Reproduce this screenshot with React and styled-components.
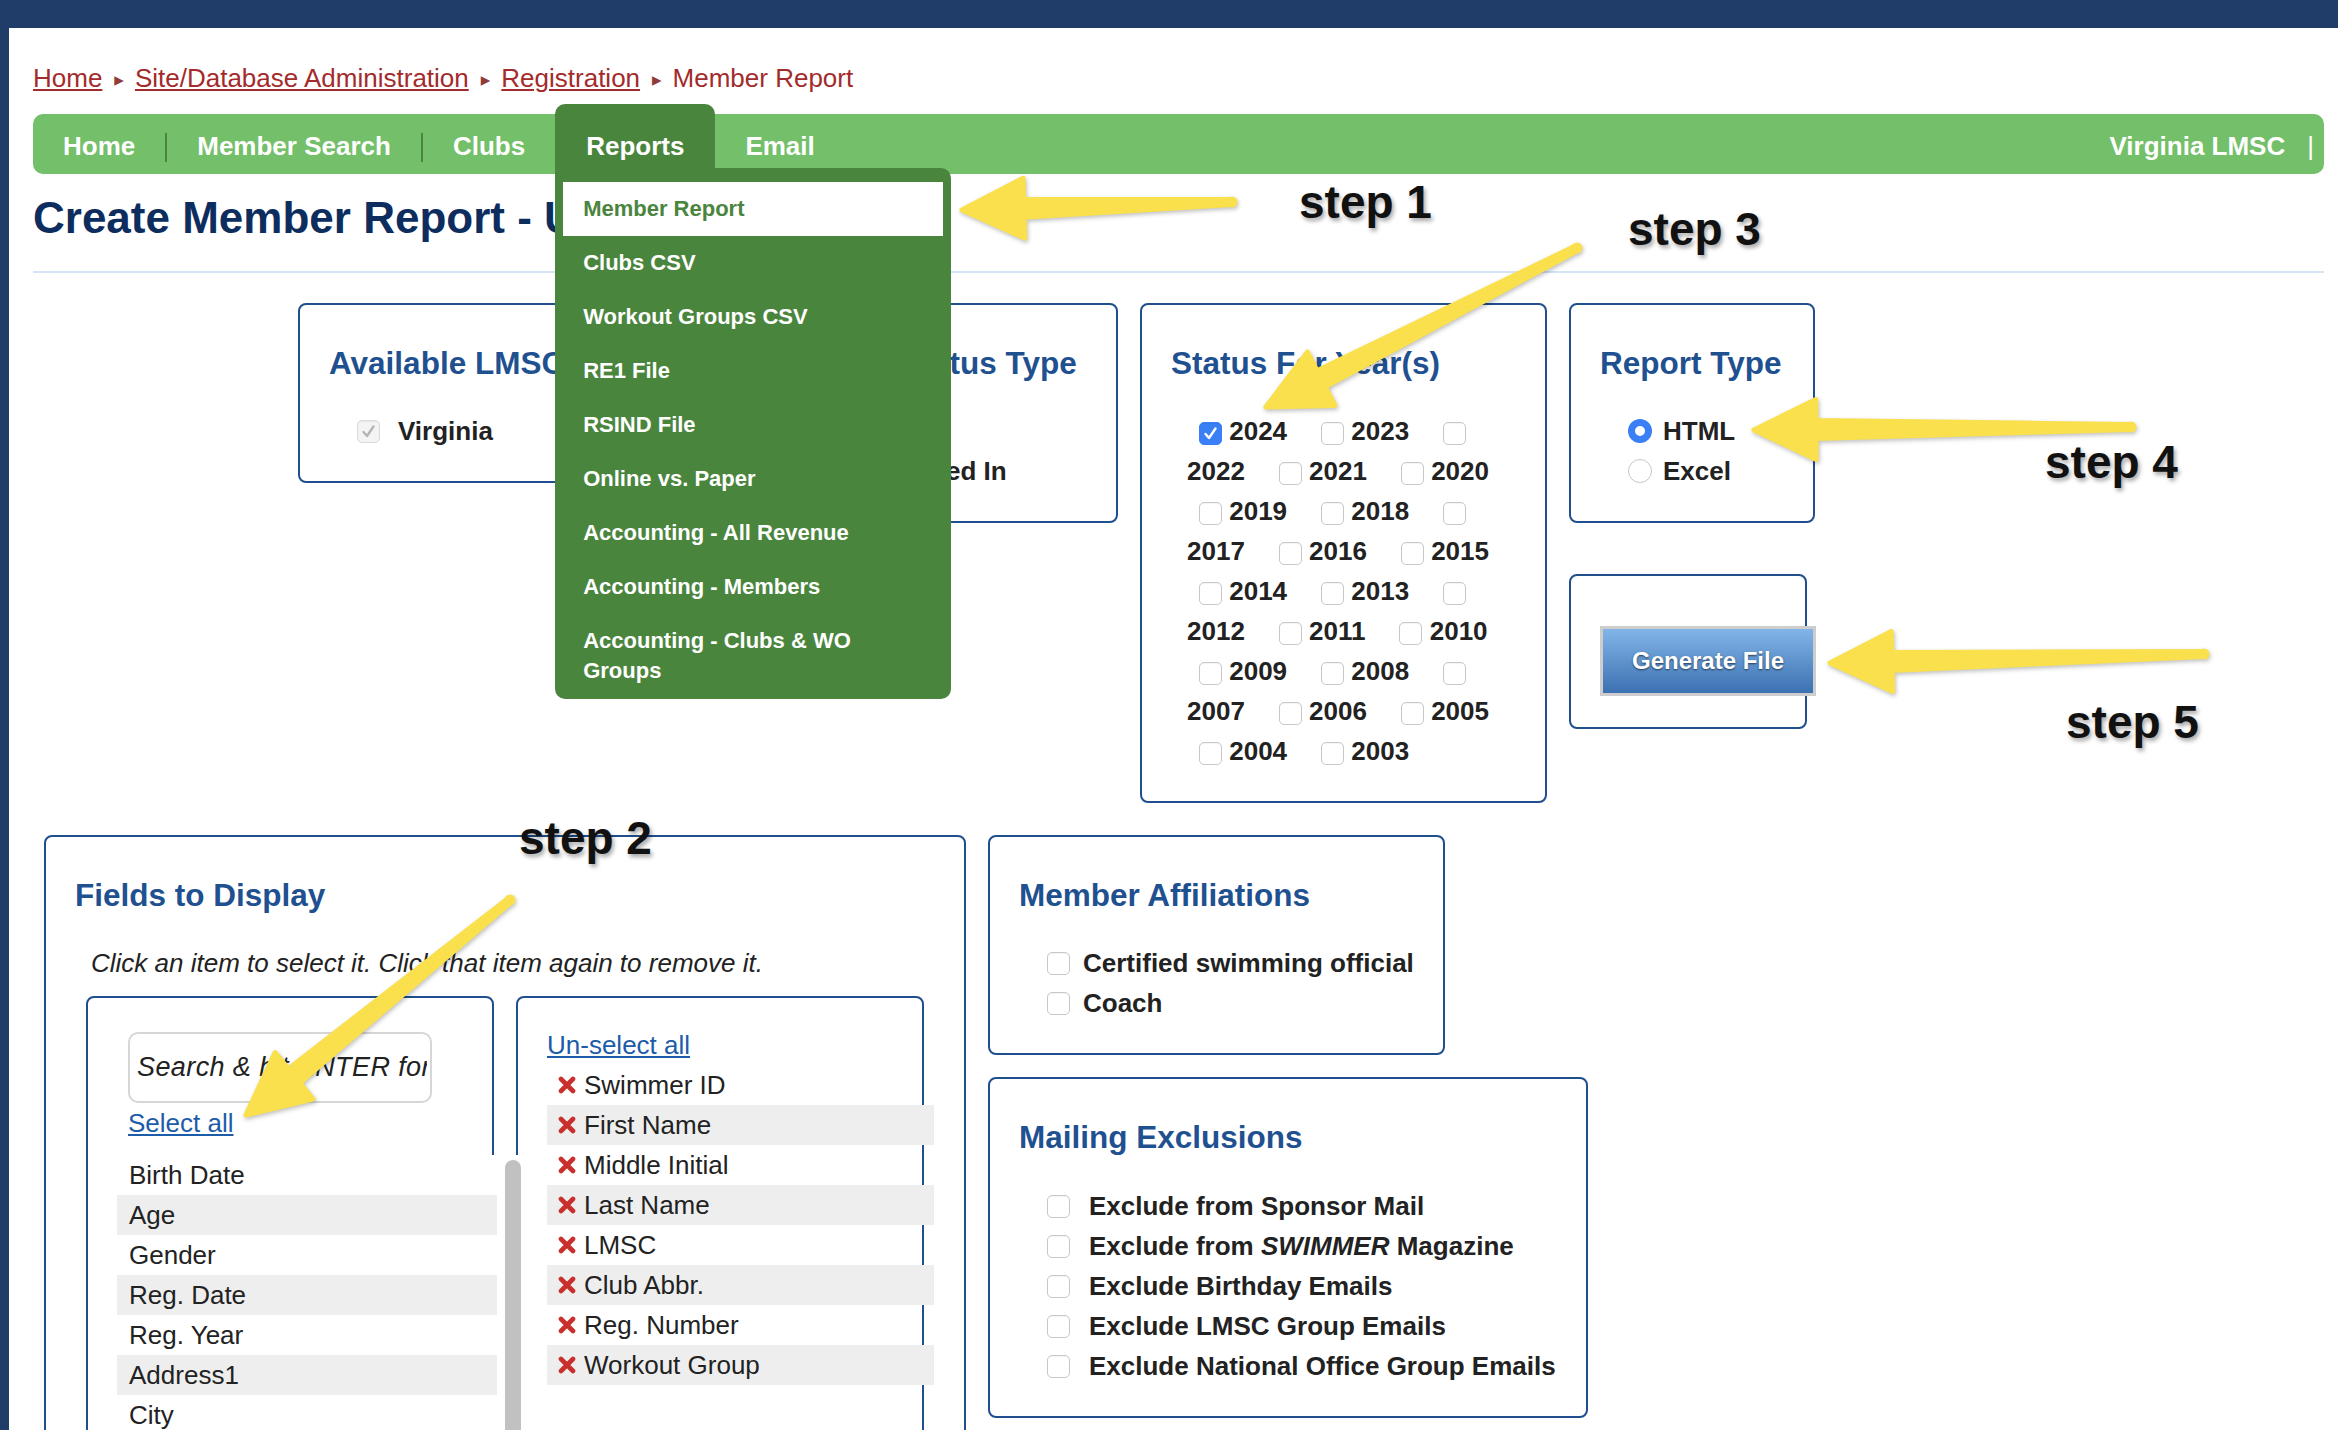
import React, { Fragment } from "react";
import styled, { createGlobalStyle } from "styled-components";

const GlobalStyle = createGlobalStyle`
  html, body {
    margin: 0;
    padding: 0;
    overflow: hidden;
    background: #fff;
  }
  body {
    font-family: "Liberation Sans", Arial, sans-serif;
    color: #222;
  }
`;

const navLinks = ["Home", "Member Search", "Clubs"];

const reportMenu = [
  "Member Report",
  "Clubs CSV",
  "Workout Groups CSV",
  "RE1 File",
  "RSIND File",
  "Online vs. Paper",
  "Accounting - All Revenue",
  "Accounting - Members",
  "Accounting - Clubs & WO Groups",
];

const years = Array.from({ length: 22 }, (v, i) => 2024 - i);

const availableFields = [
  "Birth Date",
  "Age",
  "Gender",
  "Reg. Date",
  "Reg. Year",
  "Address1",
  "City",
  "State",
  "Zip",
  "Country",
  "Email",
  "Phone",
];

const chosenFields = [
  "Swimmer ID",
  "First Name",
  "Middle Initial",
  "Last Name",
  "LMSC",
  "Club Abbr.",
  "Reg. Number",
  "Workout Group",
];

const exclusions = [
  "Exclude from Sponsor Mail",
  <Fragment>
    Exclude from <i>SWIMMER</i> Magazine
  </Fragment>,
  "Exclude Birthday Emails",
  "Exclude LMSC Group Emails",
  "Exclude National Office Group Emails",
];

// annotation arrows: tail -> tip
const arrows = [
  [[1232, 202], [962, 210]],
  [[510, 900], [246, 1115]],
  [[1577, 248], [1266, 407]],
  [[2131, 427], [1754, 430]],
  [[2204, 654], [1830, 663]],
];

const steps = [
  { label: "step 1", x: 1299, y: 180 },
  { label: "step 2", x: 519, y: 816 },
  { label: "step 3", x: 1628, y: 207 },
  { label: "step 4", x: 2045, y: 440 },
  { label: "step 5", x: 2066, y: 700 },
];

function arrowPoints([tx, ty], [px, py]) {
  const head = 62;
  const headW = 60;
  const tail = 5;
  const neck = 18;
  const dx = px - tx;
  const dy = py - ty;
  const len = Math.hypot(dx, dy);
  const ux = dx / len;
  const uy = dy / len;
  const nx = -uy;
  const ny = ux;
  const bx = px - ux * head;
  const by = py - uy * head;
  const pt = (x, y) => `${x.toFixed(1)},${y.toFixed(1)}`;
  return [
    pt(tx + (nx * tail) / 2, ty + (ny * tail) / 2),
    pt(bx + (nx * neck) / 2, by + (ny * neck) / 2),
    pt(bx + (nx * headW) / 2, by + (ny * headW) / 2),
    pt(px, py),
    pt(bx - (nx * headW) / 2, by - (ny * headW) / 2),
    pt(bx - (nx * neck) / 2, by - (ny * neck) / 2),
    pt(tx - (nx * tail) / 2, ty - (ny * tail) / 2),
  ].join(" ");
}

function CheckMark({ color }) {
  return (
    <svg width="17" height="17" viewBox="0 0 17 17">
      <path
        d="M3.5 9 L7 13 L13.5 3.5"
        fill="none"
        stroke={color}
        strokeWidth="2.4"
        strokeLinecap="round"
        strokeLinejoin="round"
      />
    </svg>
  );
}

function RedX() {
  return (
    <svg width="18" height="18" viewBox="0 0 18 18">
      <path d="M3 3 L15 15 M15 3 L3 15" stroke="#c9302c" strokeWidth="4.6" strokeLinecap="round" />
    </svg>
  );
}

function Checkbox({ checked, disabled }) {
  return (
    <Check $checked={checked} $disabled={disabled}>
      {checked && <CheckMark color="#fff" />}
      {disabled && <CheckMark color="#b4b4b4" />}
    </Check>
  );
}

function App() {
  return (
    <Frame>
      <GlobalStyle />
      <Page>
        <Crumbs>
          <CrumbLink>Home</CrumbLink>
          <CrumbSep>▸</CrumbSep>
          <CrumbLink>Site/Database Administration</CrumbLink>
          <CrumbSep>▸</CrumbSep>
          <CrumbLink>Registration</CrumbLink>
          <CrumbSep>▸</CrumbSep>
          <span>Member Report</span>
        </Crumbs>

        <NavBar>
          {navLinks.map((name, i) => (
            <Fragment key={name}>
              {i > 0 && <NavSep />}
              <NavItem>{name}</NavItem>
            </Fragment>
          ))}
          <NavTab>
            Reports
            <Dropdown>
              {reportMenu.map((item, i) => (
                <DropItem key={item} $active={i === 0}>
                  {item}
                </DropItem>
              ))}
            </Dropdown>
          </NavTab>
          <NavItem>Email</NavItem>
          <NavRight>
            Virginia LMSC<Pipe>|</Pipe>
          </NavRight>
        </NavBar>

        <PageTitle>Create Member Report - USMS</PageTitle>
        <Rule />

        <TopRow>
          <Box $width={357}>
            <BoxTitle>Available LMSCs</BoxTitle>
            <OptionList>
              <OptionRow $gap={18}>
                <Checkbox disabled />
                Virginia
              </OptionRow>
            </OptionList>
          </Box>

          <Box $width={441}>
            <BoxTitle>Registration Status Type</BoxTitle>
            <OptionList>
              <OptionRow $gap={18}>
                <Checkbox />
                All
              </OptionRow>
              <OptionRow $gap={18}>
                <Checkbox />
                Has Not Logged In
              </OptionRow>
            </OptionList>
          </Box>

          <Box $width={407}>
            <BoxTitle>Status For Year(s)</BoxTitle>
            <YearList>
              {years.map((y, i) => (
                <Fragment key={y}>
                  <Checkbox checked={i === 0} /> <YearLabel>{y}</YearLabel>
                </Fragment>
              ))}
            </YearList>
          </Box>

          <SideColumn>
            <Box $width={246}>
              <BoxTitle>Report Type</BoxTitle>
              <OptionList>
                <OptionRow $gap={11}>
                  <Radio $on />
                  HTML
                </OptionRow>
                <OptionRow $gap={11}>
                  <Radio />
                  Excel
                </OptionRow>
              </OptionList>
            </Box>
            <ButtonBox>
              <GenerateButton>Generate File</GenerateButton>
            </ButtonBox>
          </SideColumn>
        </TopRow>

        <BottomRow>
          <Box $width={922}>
            <BoxTitle>Fields to Display</BoxTitle>
            <Hint>Click an item to select it. Click that item again to remove it.</Hint>
            <ListPair>
              <ListBox $top={34}>
                <Search placeholder="Search & hit ENTER for more" />
                <TextLink $indent={11}>Select all</TextLink>
                <ScrollArea>
                  <FieldColumn>
                    {availableFields.map((f, i) => (
                      <FieldRow key={f} $shade={i % 2 === 1}>
                        {f}
                      </FieldRow>
                    ))}
                  </FieldColumn>
                  <Rail>
                    <Thumb />
                  </Rail>
                </ScrollArea>
              </ListBox>
              <ListBox $top={27}>
                <TextLink>Un-select all</TextLink>
                {chosenFields.map((f, i) => (
                  <ChosenRow key={f} $shade={i % 2 === 1}>
                    <RedX />
                    {f}
                  </ChosenRow>
                ))}
              </ListBox>
            </ListPair>
          </Box>

          <SideColumn>
            <Box $width={457}>
              <BoxTitle>Member Affiliations</BoxTitle>
              <OptionList>
                <OptionRow $gap={13}>
                  <Checkbox />
                  Certified swimming official
                </OptionRow>
                <OptionRow $gap={13}>
                  <Checkbox />
                  Coach
                </OptionRow>
              </OptionList>
            </Box>
            <Box $width={600}>
              <BoxTitle $after={29}>Mailing Exclusions</BoxTitle>
              <OptionList>
                {exclusions.map((text, i) => (
                  <OptionRow key={i} $gap={19}>
                    <Checkbox />
                    <span>{text}</span>
                  </OptionRow>
                ))}
              </OptionList>
            </Box>
          </SideColumn>
        </BottomRow>
      </Page>

      <Overlay width="2338" height="1430" viewBox="0 0 2338 1430">
        {arrows.map(([tail, tip], i) => (
          <g key={i}>
            <polygon points={arrowPoints(tail, tip)} />
            <circle cx={tail[0]} cy={tail[1]} r="3" />
          </g>
        ))}
      </Overlay>
      {steps.map((s) => (
        <StepLabel key={s.label} $x={s.x} $y={s.y}>
          {s.label}
        </StepLabel>
      ))}
    </Frame>
  );
}

export default App;

const Frame = styled.div`
  position: relative;
  width: 2338px;
  height: 1430px;
  overflow: hidden;
  box-sizing: border-box;
  padding: 28px 0 0 9px;
  background: #1f3d68;
`;

const Page = styled.div`
  height: 100%;
  box-sizing: border-box;
  padding: 35px 14px 0 24px;
  background: #fff;
`;

const Crumbs = styled.div`
  height: 30px;
  font-size: 26px;
  line-height: 30px;
  color: #a32b2b;
  white-space: nowrap;
`;

const CrumbLink = styled.a`
  color: #a32b2b;
  text-decoration: underline;
  cursor: pointer;
`;

const CrumbSep = styled.span`
  display: inline-block;
  margin: 0 11px 0 12px;
  font-family: "DejaVu Sans", sans-serif;
  font-size: 19px;
  line-height: 20px;
  color: #8e3b3b;
  vertical-align: 1px;
`;

const NavBar = styled.nav`
  position: relative;
  z-index: 5;
  display: flex;
  height: 60px;
  margin-top: 21px;
  border-radius: 10px;
  background: #74bf69;
  color: #fff;
  font-size: 26px;
  font-weight: bold;
`;

const NavItem = styled.div`
  padding: 5px 30px 0;
  line-height: 54px;
  white-space: nowrap;
  cursor: pointer;
`;

const NavSep = styled.div`
  align-self: center;
  width: 2px;
  height: 29px;
  margin-top: 6px;
  background: #4a853e;
`;

const NavTab = styled.div`
  position: relative;
  margin-top: -10px;
  padding: 15px 31px 0;
  line-height: 54px;
  border-radius: 10px 10px 0 0;
  background: #4a853e;
  white-space: nowrap;
`;

const Dropdown = styled.div`
  position: absolute;
  top: 64px;
  left: 0;
  width: 396px;
  box-sizing: border-box;
  padding: 14px 0 1px;
  border-radius: 0 10px 10px 10px;
  background: #4a853e;
  white-space: normal;
`;

const DropItem = styled.div`
  margin: 0 8px;
  padding: 12px 12px 12px 20px;
  font-size: 22px;
  line-height: 30px;
  color: ${(p) => (p.$active ? "#4a853e" : "#fff")};
  background: ${(p) => (p.$active ? "#fff" : "transparent")};
`;

const NavRight = styled.div`
  margin-left: auto;
  padding: 5px 10px 0 0;
  line-height: 54px;
  white-space: nowrap;
`;

const Pipe = styled.span`
  margin-left: 22px;
  font-weight: normal;
`;

const PageTitle = styled.h1`
  margin: 18px 0 0;
  font-size: 44px;
  line-height: 52px;
  color: #0d2d5e;
`;

const Rule = styled.div`
  height: 2px;
  margin-top: 27px;
  background: #d3e5f7;
`;

const TopRow = styled.div`
  display: flex;
  align-items: flex-start;
  gap: 22px;
  margin-top: 30px;
  padding-left: 265px;
`;

const BottomRow = styled.div`
  display: flex;
  align-items: flex-start;
  gap: 22px;
  margin-top: 32px;
  padding-left: 11px;
`;

const SideColumn = styled.div`
  display: flex;
  flex-direction: column;
  gap: 22px;

  & + & {
    margin-left: 2px;
  }
`;

const Box = styled.div`
  width: ${(p) => p.$width}px;
  box-sizing: border-box;
  padding: 0 29px 30px;
  border: 2px solid #1f4f8d;
  border-radius: 8px;
  background: #fff;
`;

const ButtonBox = styled(Box)`
  width: 238px;
  margin-top: 29px;
  padding: 50px 29px 31px;
`;

const BoxTitle = styled.h2`
  margin: 38px 0 ${(p) => p.$after || 28}px;
  font-size: 31.5px;
  line-height: 40px;
  font-weight: bold;
  color: #1f5190;
  white-space: nowrap;
`;

const OptionList = styled.div`
  margin-left: 16px;
`;

const OptionRow = styled.div`
  display: flex;
  align-items: center;
  gap: ${(p) => p.$gap}px;
  height: 40px;
  font-size: 26px;
  font-weight: bold;
  color: #222;
  white-space: nowrap;
`;

const Check = styled.span`
  display: inline-flex;
  align-items: center;
  justify-content: center;
  flex: none;
  width: 23px;
  height: 23px;
  box-sizing: border-box;
  margin-left: 12px;
  border-radius: 5px;
  border: 1px solid
    ${(p) => (p.$checked ? "#3a7ff6" : p.$disabled ? "#dadada" : "#c8c8c8")};
  background: ${(p) => (p.$checked ? "#3a7ff6" : p.$disabled ? "#f4f4f4" : "#fff")};
  box-shadow: inset 0 1px 1px rgba(0, 0, 0, 0.05);
  vertical-align: middle;
`;

const Radio = styled.span`
  flex: none;
  width: 24px;
  height: 24px;
  box-sizing: border-box;
  margin-left: 12px;
  border-radius: 50%;
  border: ${(p) => (p.$on ? "7.5px solid #3a7ff6" : "1px solid #c8c8c8")};
  background: #fff;
`;

const YearList = styled.div`
  width: 335px;
  margin-left: 16px;
  font-size: 26px;
  font-weight: bold;
  line-height: 40px;
  color: #222;
`;

const YearLabel = styled.span`
  margin-right: 22px;
`;

const GenerateButton = styled.button`
  display: block;
  width: 216px;
  height: 70px;
  box-sizing: border-box;
  padding: 0;
  border: 3px solid #cdcdcd;
  background: linear-gradient(#82b5e8, #3c71b2);
  color: #fff;
  font-family: "Liberation Sans", Arial, sans-serif;
  font-size: 24px;
  font-weight: bold;
  text-shadow: 0 1px 2px rgba(0, 0, 0, 0.6);
  cursor: pointer;
`;

const Hint = styled.div`
  margin-left: 16px;
  font-size: 26px;
  font-style: italic;
  line-height: 40px;
  white-space: nowrap;
`;

const ListPair = styled.div`
  display: flex;
  gap: 22px;
  margin: 13px 11px 0;
`;

const ListBox = styled.div`
  width: 408px;
  height: 520px;
  box-sizing: border-box;
  padding: ${(p) => p.$top}px 0 0 29px;
  border: 2px solid #1f4f8d;
  border-radius: 8px;
`;

const Search = styled.input`
  display: block;
  width: 304px;
  height: 71px;
  box-sizing: border-box;
  margin-left: 11px;
  padding: 0 3px 0 7px;
  border: 2px solid #d6d6d6;
  border-radius: 10px;
  font-family: "Liberation Sans", Arial, sans-serif;
  font-size: 27px;
  font-style: italic;
  letter-spacing: 0.4px;
  outline: none;

  &::placeholder {
    color: #222;
  }
`;

const TextLink = styled.a`
  display: block;
  width: max-content;
  margin-left: ${(p) => p.$indent || 0}px;
  font-size: 26px;
  line-height: 40px;
  color: #1c5ca8;
  text-decoration: underline;
  cursor: pointer;
`;

const ScrollArea = styled.div`
  position: relative;
  display: flex;
  width: 410px;
  height: 470px;
  margin-top: 12px;
  overflow: hidden;
  background: #fff;
`;

const FieldColumn = styled.div`
  flex: none;
  width: 380px;
`;

const Rail = styled.div`
  flex: none;
  width: 30px;
  box-sizing: border-box;
  padding: 5px 6px 0 8px;
  background: #fff;
`;

const Thumb = styled.div`
  height: 380px;
  border-radius: 8px;
  background: #c1c1c1;
`;

const FieldRow = styled.div`
  height: 40px;
  padding-left: 12px;
  font-size: 26px;
  line-height: 40px;
  background: ${(p) => (p.$shade ? "#eeeeee" : "#fff")};
`;

const ChosenRow = styled.div`
  display: flex;
  align-items: center;
  gap: 8px;
  width: 387px;
  height: 40px;
  box-sizing: border-box;
  padding-left: 11px;
  font-size: 26px;
  background: ${(p) => (p.$shade ? "#eeeeee" : "transparent")};
  position: relative;
`;

const Overlay = styled.svg`
  position: absolute;
  top: 0;
  left: 0;
  z-index: 20;
  pointer-events: none;
  fill: #f9e04c;
  stroke: #f9e04c;
  stroke-width: 5;
  stroke-linejoin: round;
  filter: drop-shadow(1px 2px 2px rgba(0, 0, 0, 0.25));
`;

const StepLabel = styled.div`
  position: absolute;
  left: ${(p) => p.$x}px;
  top: ${(p) => p.$y}px;
  z-index: 21;
  font-size: 46px;
  font-weight: bold;
  line-height: 45px;
  color: #111;
  text-shadow: 2px 3px 4px rgba(0, 0, 0, 0.35);
  white-space: nowrap;
`;
